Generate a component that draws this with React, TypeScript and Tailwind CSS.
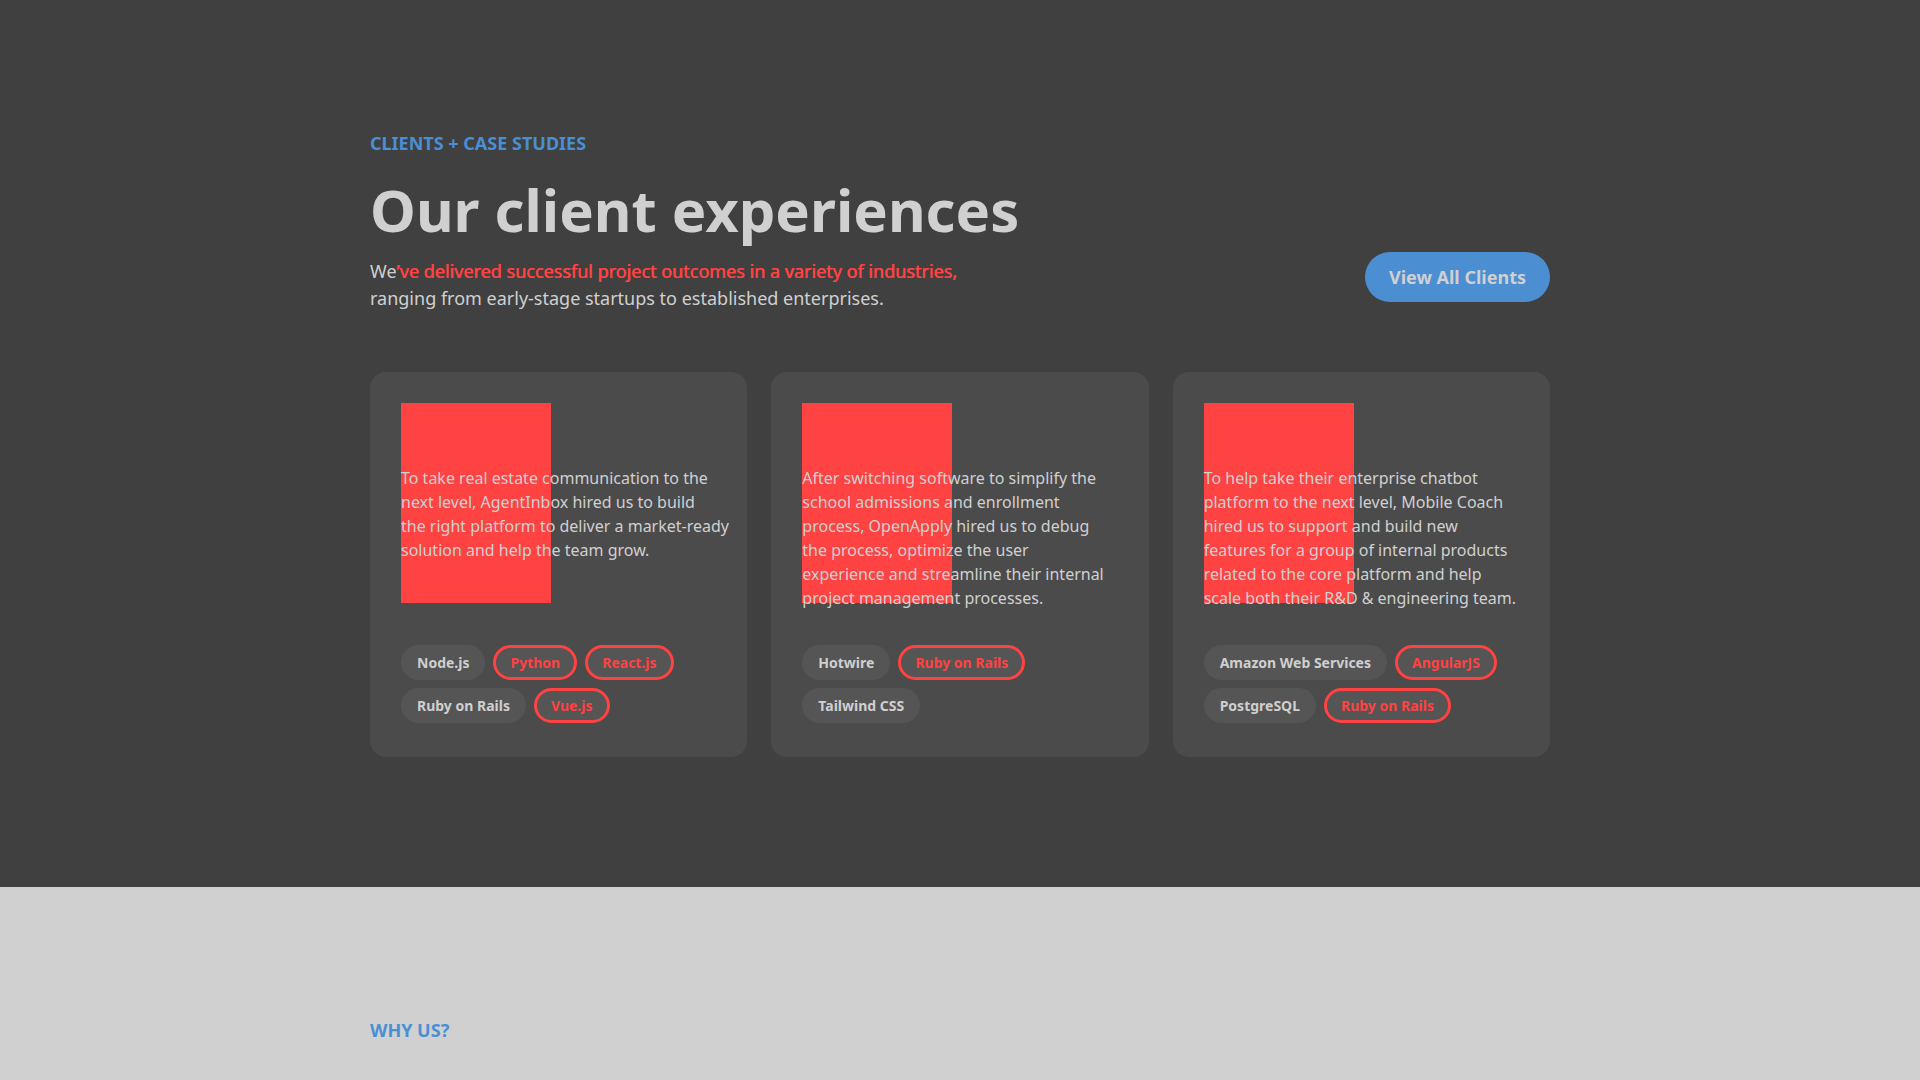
import React from "react";

type Tag = { label: string; red?: boolean };
type Card = { lines: string[]; tags: Tag[][] };

const cards: Card[] = [
  {
    lines: [
      "To take real estate communication to the",
      "next level, AgentInbox hired us to build",
      "the right platform to deliver a market-ready",
      "solution and help the team grow.",
    ],
    tags: [
      [{ label: "Node.js" }, { label: "Python", red: true }, { label: "React.js", red: true }],
      [{ label: "Ruby on Rails" }, { label: "Vue.js", red: true }],
    ],
  },
  {
    lines: [
      "After switching software to simplify the",
      "school admissions and enrollment",
      "process, OpenApply hired us to debug",
      "the process, optimize the user",
      "experience and streamline their internal",
      "project management processes.",
    ],
    tags: [
      [{ label: "Hotwire" }, { label: "Ruby on Rails", red: true }],
      [{ label: "Tailwind CSS" }],
    ],
  },
  {
    lines: [
      "To help take their enterprise chatbot",
      "platform to the next level, Mobile Coach",
      "hired us to support and build new",
      "features for a group of internal products",
      "related to the core platform and help",
      "scale both their R&D & engineering team.",
    ],
    tags: [
      [{ label: "Amazon Web Services" }, { label: "AngularJS", red: true }],
      [{ label: "PostgreSQL" }, { label: "Ruby on Rails", red: true }],
    ],
  },
];

function TagPill({ tag }: { tag: Tag }) {
  return (
    <span
      className={
        tag.red
          ? "flex h-[35px] items-center rounded-full border-[3px] border-[#ff4242] bg-[#555555] px-[14px] text-[14px] font-bold text-[#ff4242]"
          : "flex h-[35px] items-center rounded-full bg-[#555555] px-4 text-[14px] font-bold text-[#cfcfcf]"
      }
    >
      {tag.label}
    </span>
  );
}

export default function App() {
  return (
    <div className="min-h-screen bg-[#d0d0d0] font-['Noto_Sans',sans-serif]">
      <section className="bg-[#404040] pt-[129px] pb-[130px]">
        <div className="mx-auto w-[1180px]">
          <div className="text-[18px] font-bold leading-[28px] text-[#4a8fd4]">CLIENTS + CASE STUDIES</div>
          <h1 className="mt-[24px] text-[58px] font-bold leading-[58px] text-[#d0d0d0]">Our client experiences</h1>
          <div className="mt-[19px] flex items-start justify-between">
            <p className="text-[18px] leading-[27px] text-[#d0d0d0]">
              We
              <span className="text-[#ff4242] [text-shadow:0.6px_0_0_#ff4242]">
                ’ve delivered successful project outcomes in a variety of industries,
              </span>
              <br />
              ranging from early-stage startups to established enterprises.
            </p>
            <button className="-mt-[6px] h-[50px] rounded-full bg-[#4b8fd2] px-6 text-[18px] font-bold text-[#d0d0d0]">
              View All Clients
            </button>
          </div>
          <div className="mt-[60px] grid grid-cols-3 gap-6">
            {cards.map((c, i) => (
              <div key={i} className="flex flex-col rounded-2xl bg-[#4b4b4b] pl-[31px] pr-[29px] pt-[31px] pb-[34px]">
                <div className="relative h-12">
                  <div className="absolute left-0 top-0 h-[200px] w-[150px] bg-[#ff4242]" />
                </div>
                <p className="relative mt-[15px] flex-1 text-[16px] leading-[24px] text-[#d0d0d0]">
                  {c.lines.map((l, j) => (
                    <span key={j} className="block whitespace-nowrap">
                      {l}
                    </span>
                  ))}
                </p>
                <div className="relative mt-[35px] flex flex-col gap-2">
                  {c.tags.map((row, j) => (
                    <div key={j} className="flex gap-2">
                      {row.map((t, k) => (
                        <TagPill key={k} tag={t} />
                      ))}
                    </div>
                  ))}
                </div>
              </div>
            ))}
          </div>
        </div>
      </section>
      <section className="bg-[#d0d0d0] pt-[129px] pb-20">
        <div className="mx-auto w-[1180px]">
          <div className="text-[18px] font-bold leading-[28px] text-[#4a8fd4]">WHY US?</div>
        </div>
      </section>
    </div>
  );
}
